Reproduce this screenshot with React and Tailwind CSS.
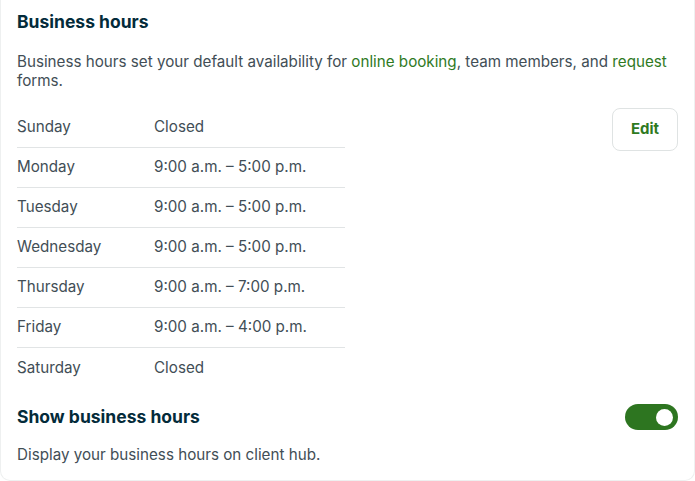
const hours = [
  { day: "Sunday", time: "Closed" },
  { day: "Monday", time: "9:00 a.m. – 5:00 p.m." },
  { day: "Tuesday", time: "9:00 a.m. – 5:00 p.m." },
  { day: "Wednesday", time: "9:00 a.m. – 5:00 p.m." },
  { day: "Thursday", time: "9:00 a.m. – 7:00 p.m." },
  { day: "Friday", time: "9:00 a.m. – 4:00 p.m." },
  { day: "Saturday", time: "Closed" },
];

export default function App() {
  return (
    <div
      className="h-[481px] w-[695px] overflow-hidden bg-white"
      style={{ fontFamily: "Inter, 'Noto Sans', sans-serif" }}
    >
      <div className="h-[481px] rounded-b-[10px] border border-t-0 border-[#eef0f0] px-[16px] pt-[10px] text-[15.2px] text-[#424e56]">
        <h2 className="text-[17.5px] font-bold leading-[24px] text-[#032b3a]">
          Business hours
        </h2>

        <p className="mt-[18px] leading-[19px]">
          Business hours set your default availability for{" "}
          <span className="text-[#2f7a1f]">online booking</span>, team members, and{" "}
          <span className="text-[#2f7a1f]">request</span> forms.
        </p>

        <div className="mt-[18px] flex items-start justify-between">
          <div className="w-[328px]">
            {hours.map((h, i) => (
              <div
                key={h.day}
                className={
                  "flex h-[40px] items-center " +
                  (i < hours.length - 1 ? "border-b border-[#e1e4e5]" : "")
                }
              >
                <span className="w-[137px]">{h.day}</span>
                <span>{h.time}</span>
              </div>
            ))}
          </div>

          <button className="h-[43px] w-[66px] rounded-[8px] border border-[#dfe3e3] text-[15px] font-bold text-[#2f7a1f]">
            Edit
          </button>
        </div>

        <div className="mt-[16px] flex items-center justify-between">
          <h3 className="text-[17.5px] font-bold leading-[24px] text-[#032b3a]">
            Show business hours
          </h3>
          <div className="flex h-[26px] w-[53px] items-center justify-end rounded-full bg-[#2d7520] pr-[5px]">
            <div className="h-[17px] w-[17px] rounded-full bg-white" />
          </div>
        </div>

        <p className="mt-[15px] leading-[19px]">Display your business hours on client hub.</p>
      </div>
    </div>
  );
}
